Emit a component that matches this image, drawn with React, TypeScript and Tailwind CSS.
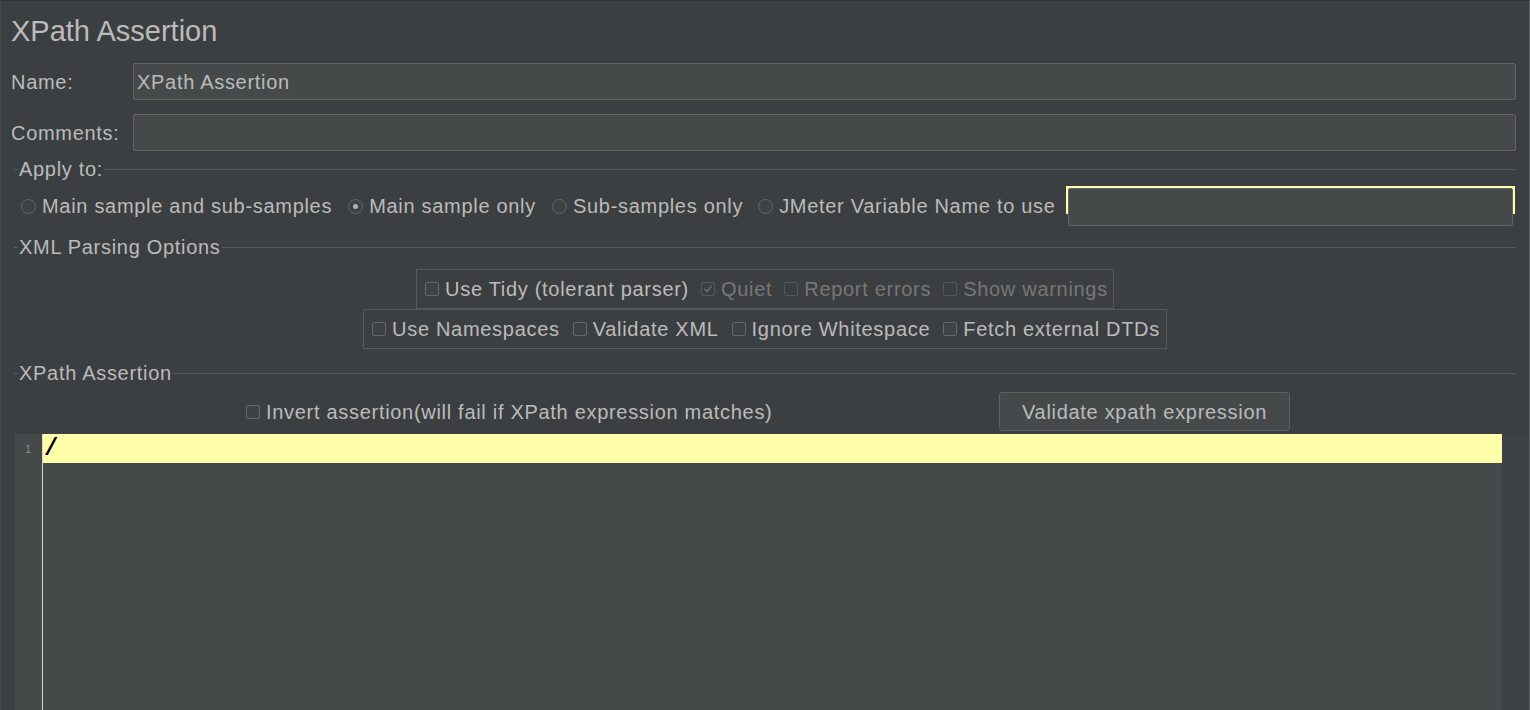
import React from 'react';

// Darcula-style JMeter "XPath Assertion" panel

function CheckBox({ checked, disabled }: { checked?: boolean; disabled?: boolean }) {
	return (
		<span
			className={`flex h-[14px] w-[14px] shrink-0 items-center justify-center rounded-[2px] border ${
				disabled ? 'border-[#55585a] bg-[#3c3f41]' : 'border-[#65686a] bg-[#3f4244]'
			}`}
		>
			{checked && (
				<svg width="10" height="10" viewBox="0 0 10 10">
					<polyline points="1.5,5 4,7.5 8.5,2" fill="none" stroke="#6f7173" strokeWidth="1.3" />
				</svg>
			)}
		</span>
	);
}

function Radio({ selected }: { selected?: boolean }) {
	return (
		<span className="flex h-[15px] w-[15px] shrink-0 items-center justify-center rounded-full border border-[#65686a] bg-[#3f4244]">
			{selected && <span className="h-[5px] w-[5px] rounded-full bg-[#b0b0b0]" />}
		</span>
	);
}

function Option({ label, checked, disabled }: { label: string; checked?: boolean; disabled?: boolean }) {
	return (
		<label className="flex items-center gap-[6px]">
			<CheckBox checked={checked} disabled={disabled} />
			<span className={disabled ? 'text-[#777777]' : 'text-[#bbbbbb]'}>{label}</span>
		</label>
	);
}

function GroupTitle({ title }: { title: string }) {
	return (
		<div className="flex h-[24px] items-center pl-[13px] pr-[14px]">
			<span className="h-px w-[4px] bg-[#56595b]" />
			<span className="px-px">{title}</span>
			<span className="h-px flex-1 bg-[#56595b]" />
		</div>
	);
}

export default function App() {
	return (
		<div className="flex h-[710px] w-[1530px] flex-col overflow-hidden border-t border-l border-r border-t-[#313335] border-l-[#47494b] border-r-[#5d6062] bg-[#3c3f41] font-['Liberation_Sans',Arial,sans-serif] text-[20px] tracking-[0.7px] text-[#bbbbbb]">
			{/* Title */}
			<div className="h-[62px] pl-[10px] pt-[13px] text-[29px] leading-[34px] tracking-normal">
				XPath Assertion
			</div>

			{/* Name / Comments */}
			<div className="flex h-[37px] items-center pl-[10px] pr-[13px]">
				<span className="w-[122px]">Name:</span>
				<div className="flex h-full flex-1 items-center rounded-[2px] border border-[#646464] bg-[#45494a] pl-[3px]">
					XPath Assertion
				</div>
			</div>
			<div className="mt-[14px] flex h-[37px] items-center pl-[10px] pr-[13px]">
				<span className="w-[122px]">Comments:</span>
				<div className="h-full flex-1 rounded-[2px] border border-[#646464] bg-[#45494a]" />
			</div>

			{/* Apply to */}
			<div className="mt-[6px]">
				<GroupTitle title="Apply to:" />
			</div>
			<div className="mt-[5px] flex h-[40px] items-center pl-[20px] pr-[14px]">
				<label className="flex items-center gap-[6px]">
					<Radio />
					<span>Main sample and sub-samples</span>
				</label>
				<label className="ml-[16px] flex items-center gap-[6px]">
					<Radio selected />
					<span>Main sample only</span>
				</label>
				<label className="ml-[16px] flex items-center gap-[6px]">
					<Radio />
					<span>Sub-samples only</span>
				</label>
				<label className="ml-[15px] flex items-center gap-[6px]">
					<Radio />
					<span>JMeter Variable Name to use</span>
				</label>
				<div className="ml-[10px] h-full flex-1 bg-[linear-gradient(#ffffaa_0_28px,transparent_28px)] px-[2px] pt-[2px]">
					<div className="h-[38px] rounded-[2px] border border-[#646464] bg-[#45494a]" />
				</div>
			</div>

			{/* XML Parsing Options */}
			<div className="mt-[9px]">
				<GroupTitle title="XML Parsing Options" />
			</div>
			<div className="mt-[10px] flex justify-center">
				<div className="flex h-[40px] items-center gap-[12px] border border-[#56595b] pl-[8px] pr-[5px]">
					<Option label="Use Tidy (tolerant parser)" />
					<Option label="Quiet" checked disabled />
					<Option label="Report errors" disabled />
					<Option label="Show warnings" disabled />
				</div>
			</div>
			<div className="flex justify-center">
				<div className="flex h-[40px] items-center gap-[13px] border border-[#56595b] pl-[8px] pr-[6px]">
					<Option label="Use Namespaces" />
					<Option label="Validate XML" />
					<Option label="Ignore Whitespace" />
					<Option label="Fetch external DTDs" />
				</div>
			</div>

			{/* XPath Assertion */}
			<div className="mt-[12px]">
				<GroupTitle title="XPath Assertion" />
			</div>
			<div className="mt-[7px] flex h-[40px] items-start pl-[245px]">
				<div className="flex h-[39px] w-[753px] items-center">
					<Option label="Invert assertion(will fail if XPath expression matches)" />
				</div>
				<button className="h-[39px] rounded-[3px] border border-[#5e6163] bg-[#45494a] px-[22px] tracking-[0.7px] text-[#bbbbbb]">
					Validate xpath expression
				</button>
			</div>

			{/* Editor */}
			<div className="mt-[2px] flex flex-1 pl-[14px]">
				<div className="w-[27px] bg-[#45494a] pl-[10px] pt-[9px] font-['DejaVu_Sans',sans-serif] text-[10px] leading-[14px] tracking-normal text-[#8a8a8a]">
					1
				</div>
				<div className="w-px bg-[#d4d4d4]" />
				<div className="flex w-[1459px] flex-col bg-[#46494a]">
					<div className="flex h-[29px] items-center bg-[#ffffaa] pl-[1px] font-['Liberation_Mono',monospace] text-[24px] font-bold tracking-normal text-black">
						/
					</div>
				</div>
				<div className="flex-1 bg-[#3e4244]" />
			</div>
		</div>
	);
}
